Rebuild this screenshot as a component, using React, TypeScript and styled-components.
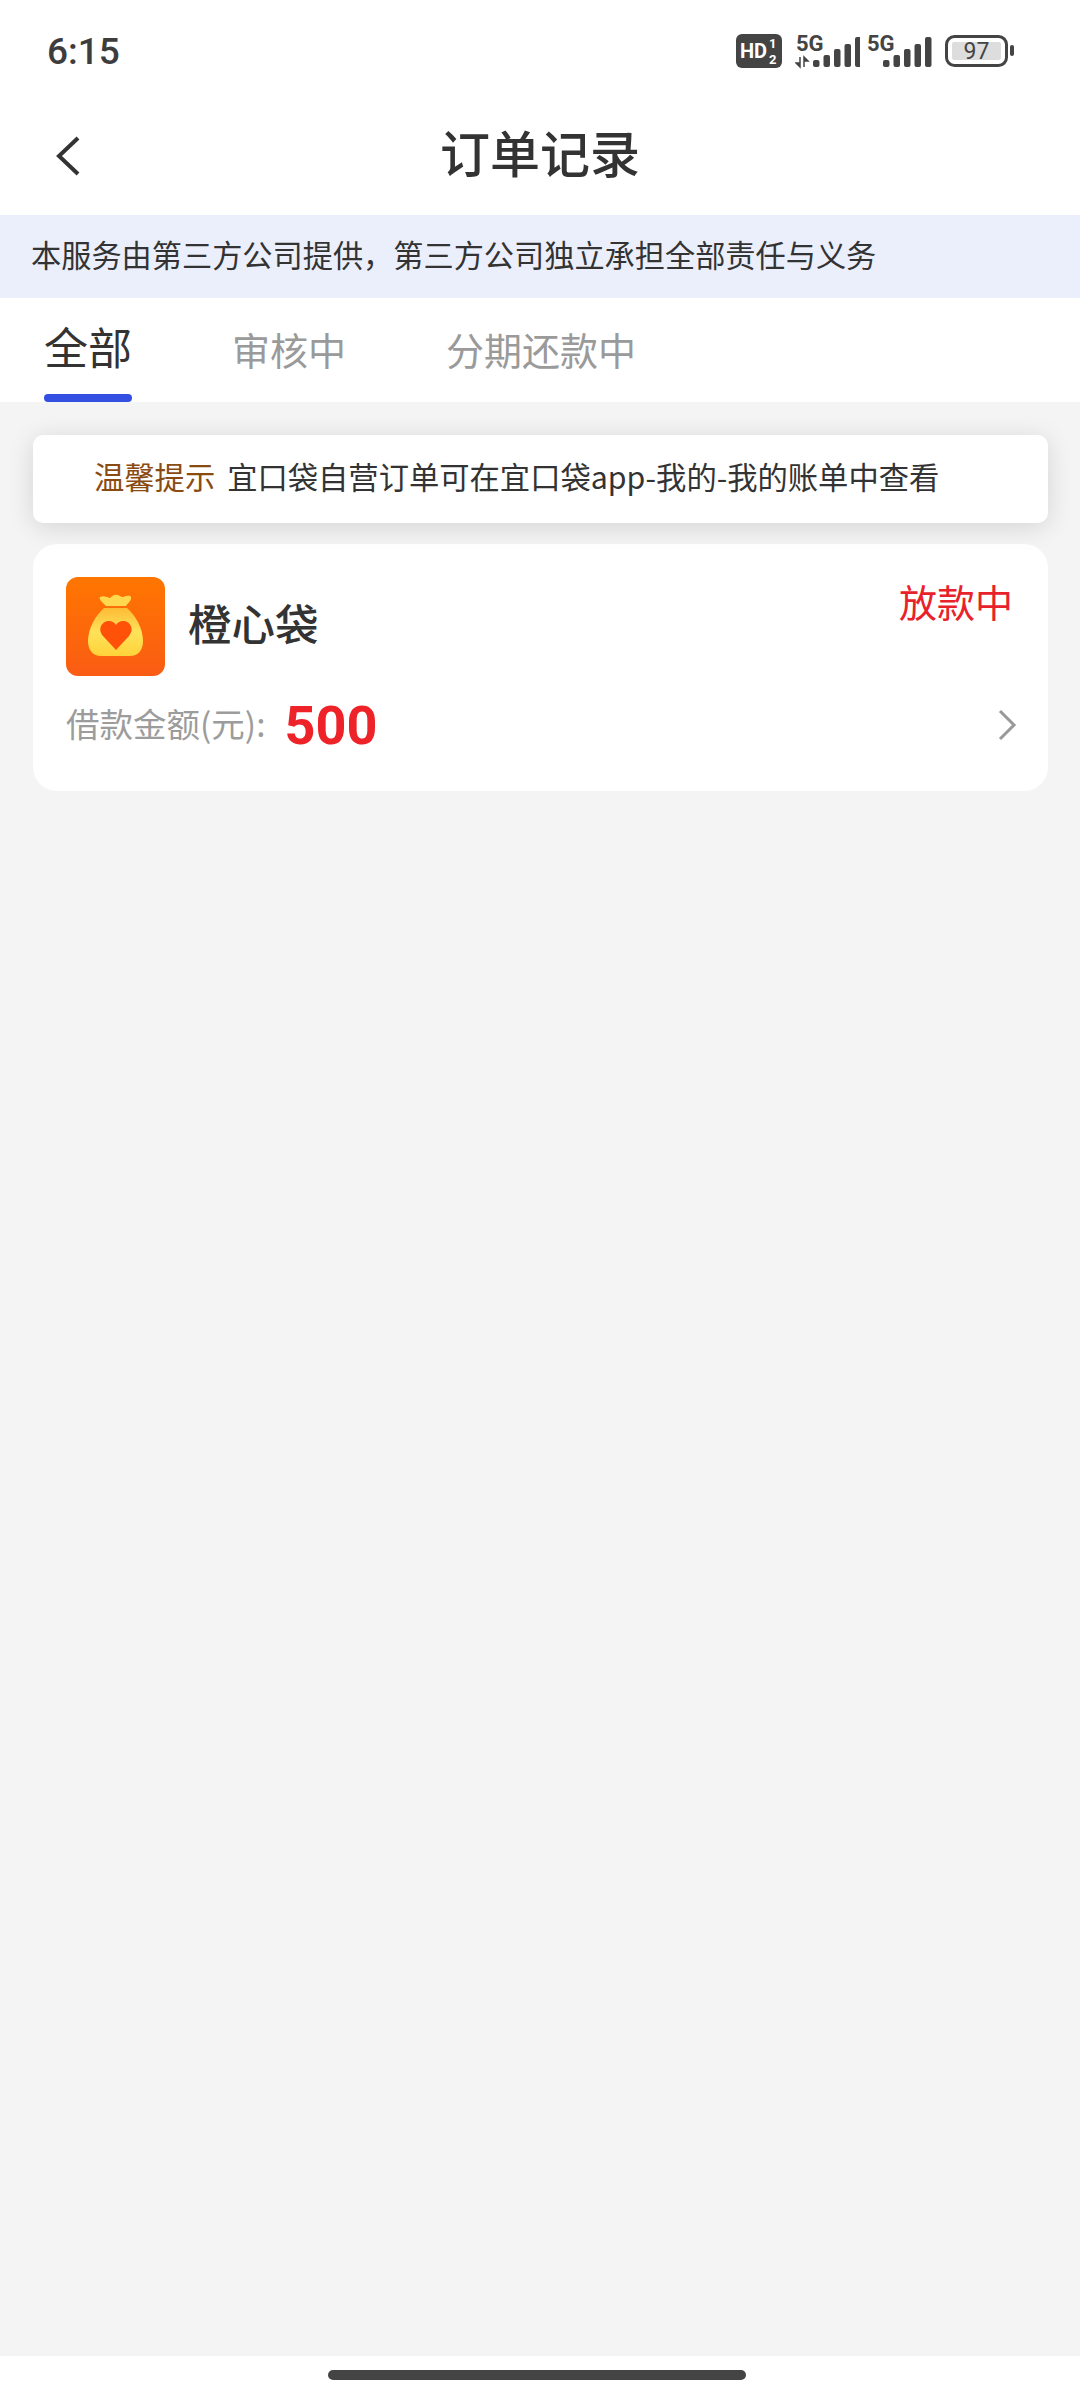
import React from 'react';
import styled, { createGlobalStyle } from 'styled-components';

const GlobalStyle = createGlobalStyle`
  html, body {
    margin: 0;
    padding: 0;
    background: #f4f4f4;
  }
  body {
    font-family: "Noto Sans CJK SC", "Noto Sans", sans-serif;
  }
`;

const Page = styled.div`
  width: 1080px;
  height: 2400px;
  display: flex;
  flex-direction: column;
  background: #f4f4f4;
  color: #333;
  overflow: hidden;
`;

const StatusBar = styled.div`
  height: 100px;
  flex: none;
  box-sizing: border-box;
  display: flex;
  align-items: center;
  justify-content: space-between;
  padding: 2px 65px 0 47px;
  background: #fff;
`;

const Time = styled.span`
  font-family: Roboto, sans-serif;
  font-size: 37px;
  font-weight: 500;
  color: #3d3d3d;
`;

const StatusIcons = styled.div`
  display: flex;
  align-items: center;
  gap: 13px;
`;

const SignalGroup = styled.div`
  display: flex;
  align-items: center;
  gap: 7px;
`;

const HdBadge = styled.svg`
  width: 46px;
  height: 34px;
`;

const SignalIcon = styled.svg`
  width: 65px;
  height: 40px;
  margin-bottom: 4px;
`;

const Battery = styled.svg`
  width: 70px;
  height: 32px;
`;

const NavBar = styled.header`
  height: 115px;
  flex: none;
  position: relative;
  display: flex;
  align-items: center;
  justify-content: center;
  background: #fff;
`;

const BackButton = styled.svg`
  position: absolute;
  left: 55px;
  top: 35px;
  width: 26px;
  height: 42px;
`;

const Title = styled.h1`
  margin: 0 0 14px;
  font-size: 50px;
  line-height: 70px;
  font-weight: 500;
  color: #333;
`;

const Notice = styled.div`
  height: 83px;
  flex: none;
  box-sizing: border-box;
  display: flex;
  align-items: center;
  padding: 0 0 5px 31px;
  background: #ebeffc;
  font-size: 30.2px;
  color: #333;
`;

const Tabs = styled.nav`
  height: 104px;
  flex: none;
  display: flex;
  background: #fff;
`;

const Tab = styled.div<{ $active?: boolean; $left: number }>`
  position: relative;
  margin-left: ${(props) => props.$left}px;
  padding-top: ${(props) => (props.$active ? 17 : 20)}px;
  font-size: ${(props) => (props.$active ? 44 : 38)}px;
  line-height: 62px;
  color: ${(props) => (props.$active ? '#333' : '#9a9a9a')};

  ${(props) =>
    props.$active &&
    `
    &::after {
      content: '';
      position: absolute;
      left: 0;
      right: 0;
      bottom: 0;
      height: 8px;
      border-radius: 4px;
      background: #3350e3;
    }
  `}
`;

const Content = styled.main`
  flex: 1;
  display: flex;
  flex-direction: column;
  gap: 21px;
  padding: 33px 32px 0 33px;
`;

const TipCard = styled.div`
  height: 88px;
  box-sizing: border-box;
  display: flex;
  align-items: center;
  gap: 12px;
  padding: 0 0 6px 61px;
  border-radius: 10px;
  background: #fff;
  box-shadow: 0 4px 26px rgba(0, 0, 0, 0.13);
  font-size: 30.3px;
  color: #333;
  position: relative;
`;

const TipLabel = styled.span`
  color: #8a4b12;
`;

const OrderCard = styled.section`
  height: 247px;
  box-sizing: border-box;
  padding: 33px 33px 0;
  border-radius: 24px;
  background: #fff;
`;

const OrderHead = styled.div`
  display: flex;
  align-items: flex-start;
`;

const Logo = styled.svg`
  width: 99px;
  height: 99px;
  flex: none;
`;

const OrderName = styled.div`
  margin-left: 23px;
  font-size: 43.5px;
  font-weight: 500;
  line-height: 91px;
  color: #333;
`;

const OrderStatus = styled.div`
  margin-left: auto;
  margin-right: 2px;
  font-size: 38px;
  line-height: 48px;
  color: #e8222b;
`;

const AmountRow = styled.div`
  display: flex;
  align-items: center;
  height: 60px;
  margin-top: 19px;
`;

const AmountLabel = styled.span`
  margin-bottom: 6px;
  font-size: 33.5px;
  color: #9c9c9c;
`;

const Amount = styled.span`
  margin-left: 19px;
  font-family: Roboto, sans-serif;
  font-size: 54px;
  font-weight: 700;
  color: #ee2229;
`;

const Chevron = styled.svg`
  margin: 0 -2px 0 auto;
  width: 20px;
  height: 32px;
`;

const Footer = styled.footer`
  height: 44px;
  flex: none;
  display: flex;
  justify-content: center;
  padding-top: 14px;
  box-sizing: border-box;
  background: #fff;
`;

const HomeBar = styled.div`
  width: 418px;
  height: 10px;
  margin-right: 6px;
  border-radius: 5px;
  background: #444;
`;

const Bars = ({ x }: { x: number }) => (
  <g fill="#444">
    {[7, 12, 18, 23, 30].map((h, i) => (
      <rect key={i} x={x + i * 10.5} y={34 - h} width={6.5} height={h} rx={2} />
    ))}
  </g>
);

const IconText = styled.text`
  font-family: Roboto, sans-serif;
  font-weight: 700;
`;

const App = () => (
  <Page>
    <GlobalStyle />
    <StatusBar>
      <Time>6:15</Time>
      <StatusIcons>
        <HdBadge viewBox="0 0 46 34">
          <rect width="46" height="34" rx="6" fill="#444" />
          <IconText x="4" y="24" fontSize="20" fill="#fff">HD</IconText>
          <IconText x="33" y="14" fontSize="13" fill="#fff">1</IconText>
          <IconText x="33" y="30" fontSize="13" fill="#fff">2</IconText>
        </HdBadge>
        <SignalGroup>
          <SignalIcon viewBox="0 -4 65 40">
            <IconText x="1" y="18" fontSize="22" fill="#444">5G</IconText>
            <path d="M5 24v10l-4-4h4M9 34V24l4 4H9" fill="#444" stroke="#444" strokeWidth="1.5" />
            <Bars x={18} />
          </SignalIcon>
          <SignalIcon viewBox="0 -4 65 40">
            <IconText x="0" y="18" fontSize="22" fill="#444">5G</IconText>
            <Bars x={16} />
          </SignalIcon>
        </SignalGroup>
        <Battery viewBox="0 0 70 32">
          <rect x="1.5" y="1.5" width="60" height="29" rx="8" fill="#fff" stroke="#444" strokeWidth="3" />
          <rect x="7" y="7" width="49" height="18" rx="2" fill="#ddd" />
          <text x="31.5" y="24" fontFamily="Roboto, sans-serif" fontSize="23" fill="#444" textAnchor="middle">97</text>
          <rect x="65" y="10" width="4" height="11" rx="2" fill="#444" />
        </Battery>
      </StatusIcons>
    </StatusBar>

    <NavBar>
      <BackButton viewBox="0 0 26 42" fill="none" stroke="#333" strokeWidth="4">
        <path d="M23 3 4 21l19 18" />
      </BackButton>
      <Title>订单记录</Title>
    </NavBar>

    <Notice>本服务由第三方公司提供，第三方公司独立承担全部责任与义务</Notice>

    <Tabs>
      <Tab $active $left={44}>全部</Tab>
      <Tab $left={100}>审核中</Tab>
      <Tab $left={100}>分期还款中</Tab>
    </Tabs>

    <Content>
      <TipCard>
        <TipLabel>温馨提示</TipLabel>
        <span>宜口袋自营订单可在宜口袋app-我的-我的账单中查看</span>
      </TipCard>

      <OrderCard>
        <OrderHead>
          <Logo viewBox="0 0 99 99">
            <defs>
              <linearGradient id="logoBg" x1="0" y1="0" x2="0" y2="1">
                <stop offset="0" stopColor="#ff7600" />
                <stop offset="1" stopColor="#fa5c14" />
              </linearGradient>
              <linearGradient id="bagFill" x1="0" y1="0" x2="0" y2="1">
                <stop offset="0" stopColor="#fdbb35" />
                <stop offset="0.5" stopColor="#ffe25a" />
                <stop offset="1" stopColor="#ffd23a" />
              </linearGradient>
            </defs>
            <rect width="99" height="99" rx="12" fill="url(#logoBg)" />
            <path d="M34 20c4-2 7 0 10 1 2-2 5-4 7-3 2 0 4 2 6 2 3-1 7-2 8 0 1 3-3 6-5 9H40c-2-2-8-7-6-9z" fill="#ffd84f" />
            <path d="M38 31h23c8 7 16 20 16 33 0 9-5 15-13 15H35c-8 0-13-6-13-15 0-13 8-26 16-33z" fill="url(#bagFill)" />
            <path d="M50 73 37 59c-6-7-1-15 6-15 3 0 5 1 7 4 2-3 4-4 7-4 7 0 12 8 6 15z" fill="#ff5208" />
          </Logo>
          <OrderName>橙心袋</OrderName>
          <OrderStatus>放款中</OrderStatus>
        </OrderHead>
        <AmountRow>
          <AmountLabel>借款金额(元):</AmountLabel>
          <Amount>500</Amount>
          <Chevron viewBox="0 0 20 32" fill="none" stroke="#999" strokeWidth="3">
            <path d="M3 2l14 14L3 30" />
          </Chevron>
        </AmountRow>
      </OrderCard>
    </Content>

    <Footer>
      <HomeBar />
    </Footer>
  </Page>
);

export default App;
